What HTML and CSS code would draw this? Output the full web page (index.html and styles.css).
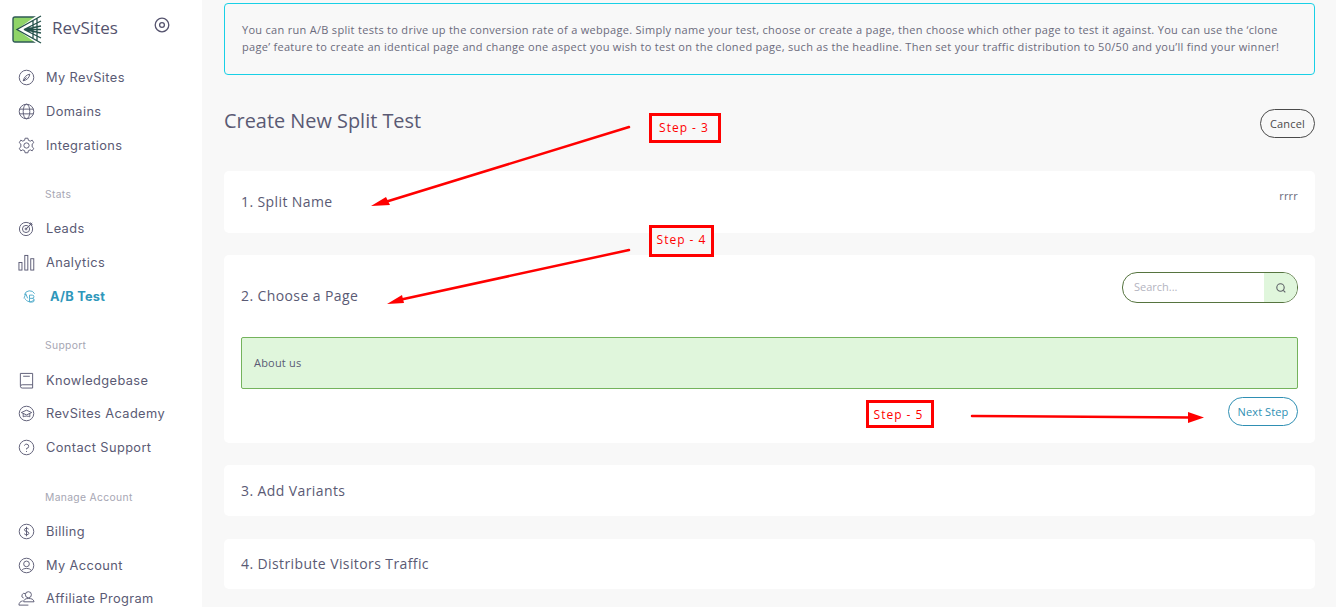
FILE: index.html
```html
<!DOCTYPE html>
<html lang="en">
<head>
<meta charset="utf-8">
<title>RevSites - Create New Split Test</title>
<link rel="stylesheet" href="styles.css">
</head>
<body>
<div class="app">
  <aside class="sidebar">
    <div class="brand">
      <svg class="logo" width="30" height="29" viewBox="0 0 30 29">
        <rect x="1" y="2" width="26" height="25" rx="2" fill="#8fd468" stroke="#2f5a55" stroke-width="1.400"/>
        <path d="M29 0V29L24 28L5 14.500L24 1Z" fill="#fff"/>
        <path d="M29 1L5 14.500L29 28M29 6L12 14.500L29 11M12 14.500H29M12 14.500L29 18M12 14.500L29 23M21 6V23M25 3.500V25.500" fill="none" stroke="#24514a" stroke-width="1.300"/>
      </svg>
      <span class="brand-name">RevSites</span>
      <svg class="collapse" width="16" height="16" viewBox="0 0 16 16" fill="none" stroke="#56546f" stroke-width="1.300"><circle cx="8" cy="8" r="6.800"/><circle cx="8" cy="8" r="2.400"/></svg>
    </div>
    <nav class="nav-group first">
      <a class="nav-item"><svg class="ico" viewBox="0 0 18 18"><circle cx="9" cy="9" r="7.700"/><path d="M12.500 5.500C9 6 6.500 8.500 5.500 12.500C9 12 12 9.500 12.500 5.500ZM5.500 12.500L9 9"/></svg>My RevSites</a>
      <a class="nav-item"><svg class="ico" viewBox="0 0 18 18"><circle cx="9" cy="9" r="7.700"/><ellipse cx="9" cy="9" rx="3.500" ry="7.700"/><path d="M1.500 6.500H16.500M1.500 11.500H16.500"/></svg>Domains</a>
      <a class="nav-item"><svg class="ico" viewBox="0 0 18 18"><circle cx="9" cy="9" r="2.800"/><path d="M7.500 1.300H10.500L11 3.500L13 4.400L15 3.300L16.700 6L15 7.500V10.500L16.700 12L15 14.700L13 13.600L11 14.500L10.500 16.700H7.500L7 14.500L5 13.600L3 14.700L1.300 12L3 10.500V7.500L1.300 6L3 3.300L5 4.400L7 3.500Z"/></svg>Integrations</a>
    </nav>
    <div class="nav-label label-stats">Stats</div>
    <nav class="nav-group">
      <a class="nav-item"><svg class="ico" viewBox="0 0 18 18"><circle cx="8.500" cy="9.500" r="7"/><circle cx="8.500" cy="9.500" r="3.800"/><circle cx="8.500" cy="9.500" r="1"/><path d="M8.500 9.500L15 3M13 2.500V5H15.500"/></svg>Leads</a>
      <a class="nav-item"><svg class="ico" viewBox="0 0 18 18"><rect x="1" y="9" width="3.200" height="8"/><rect x="7.200" y="1.500" width="3.200" height="15.500"/><rect x="13.500" y="5" width="3.200" height="12"/></svg>Analytics</a>
      <a class="nav-item active"><svg class="ico ab" viewBox="0 0 14 14"><path d="M1.500 5A6 6 0 0 1 12.500 4M12 10.500A6 6 0 0 1 2 9"/><path d="M1 9L3 4L5 9"/><path d="M7 5.500H10A1.700 1.700 0 0 1 10 9H7ZM10 9A1.900 1.900 0 0 1 10 13H7V9"/></svg>A/B Test</a>
    </nav>
    <div class="nav-label label-support">Support</div>
    <nav class="nav-group">
      <a class="nav-item"><svg class="ico" viewBox="0 0 18 18"><path d="M2.500 14.500V1.500H15.500V17H4.500A2 2 0 0 1 2.500 15A2 2 0 0 1 4.500 13.500H15.500M5.500 4.500H12.500"/></svg>Knowledgebase</a>
      <a class="nav-item nudge"><svg class="ico" viewBox="0 0 18 18"><circle cx="9" cy="9" r="7.700"/><path d="M3.500 8L9 5.500L14.500 8L9 10.500ZM5.500 9V12.500C7.500 11.500 10.500 11.500 12.500 12.500V9"/></svg>RevSites Academy</a>
      <a class="nav-item"><svg class="ico" viewBox="0 0 18 18"><circle cx="9" cy="9" r="7.700"/><path d="M6.800 7A2.300 2.300 0 1 1 9 10V11M9 12.700V13.700"/></svg>Contact Support</a>
    </nav>
    <div class="nav-label label-manage">Manage Account</div>
    <nav class="nav-group">
      <a class="nav-item"><svg class="ico" viewBox="0 0 18 18"><circle cx="9" cy="9" r="7.700"/><path d="M11.300 6.500C10.800 5.300 6.800 5 6.800 7.200C6.800 9.500 11.500 8.500 11.500 10.900C11.500 13 7.300 12.800 6.600 11.400M9 4V14"/></svg>Billing</a>
      <a class="nav-item"><svg class="ico" viewBox="0 0 18 18"><circle cx="9" cy="9" r="7.700"/><circle cx="9" cy="7.300" r="3"/><path d="M3.800 14.500C5 11.300 13 11.300 14.200 14.500"/></svg>My Account</a>
      <a class="nav-item nudge"><svg class="ico" viewBox="0 0 18 18"><circle cx="11" cy="5" r="3.200"/><path d="M6 8.500A2.500 2.500 0 1 1 8 4M6 12.500H17C16.500 9.500 14 9 11 9C8 9 6 10 6 12.500ZM1 16H11M1 16C1 13.500 2.500 12 5 11.500"/></svg>Affiliate Program</a>
    </nav>
  </aside>

  <main class="content">
    <div class="notice">You can run A/B split tests to drive up the conversion rate of a webpage. Simply name your test, choose or create a page, then choose which other page to test it against. You can use the ‘clone page’ feature to create an identical page and change one aspect you wish to test on the cloned page, such as the headline. Then set your traffic distribution to 50/50 and you’ll find your winner!</div>

    <div class="page-head">
      <h1>Create New Split Test</h1>
      <button class="btn btn-cancel">Cancel</button>
    </div>

    <section class="card card-name">
      <h2>1. Split Name</h2>
      <span class="split-value">rrrr</span>
    </section>

    <section class="card card-page">
      <div class="card-row">
        <h2>2. Choose a Page</h2>
        <div class="search">
          <span class="search-input">Search...</span>
          <span class="search-btn"><svg width="10" height="10" viewBox="0 0 10 10" fill="none" stroke="#5c6066" stroke-width="1.100"><circle cx="4.500" cy="4.500" r="3.700"/><path d="M7.300 7.300L9.300 9.300"/></svg></span>
        </div>
      </div>
      <div class="page-option">About us</div>
      <div class="card-actions"><button class="btn btn-next">Next Step</button></div>
    </section>

    <section class="card card-plain"><h2>3. Add Variants</h2></section>
    <section class="card card-plain card-last"><h2>4. Distribute Visitors Traffic</h2></section>
  </main>
</div>

<div class="step step-3">Step - 3</div>
<div class="step step-4">Step - 4</div>
<div class="step step-5">Step - 5</div>
<svg class="arrows" width="1336" height="607" viewBox="0 0 1336 607">
  <path d="M629 127L382 203M629 250L399 300M972 416L1190 417.500" fill="none" stroke="#f00" stroke-width="2.500" stroke-linecap="round"/>
  <path d="M371 206L386 197L390 205ZM387 304L402 295L404 303ZM1204 417.500L1188 412V423Z" fill="#f00"/>
</svg>
</body>
</html>
```
FILE: styles.css
```css
* { box-sizing: border-box; }
html, body { margin: 0; height: 607px; overflow: hidden; }
body { font-family: "Open Sans", "Liberation Sans", sans-serif; background: #f8f8f8; color: #5a5a74; }

.app { display: flex; height: 607px; overflow: hidden; }

.sidebar { flex: 0 0 202px; background: #fff; padding: 13px 0 0 12px; font-family: Inter, "Open Sans", sans-serif; }
.brand { display: flex; align-items: center; height: 32px; }
.logo { flex: none; }
.brand-name { margin-left: 10px; font: 500 17px "Open Sans", sans-serif; color: #55536e; position: relative; top: -2px; }
.collapse { margin-left: 36px; position: relative; top: -4px; }

.nav-group { display: flex; flex-direction: column; }
.nav-group.first { margin-top: 15px; }
.nav-item { display: flex; align-items: center; height: 34px; font-size: 12.800px; letter-spacing: .4px; color: #5a5a74; }
.nav-item.nudge { height: 33px; }
.ico { flex: none; width: 17px; height: 17px; margin: 0 11px 0 6px; fill: none; stroke: #5a5a74; stroke-width: 1; }
.nav-item.active { color: #2f97bb; font-weight: 700; letter-spacing: .25px; }
.ico.ab { width: 13px; height: 13px; margin: 0 14px 0 11px; stroke: #4ba9c9; }

.nav-label { margin-left: 33px; font-size: 10.300px; letter-spacing: .35px; color: #a6a6b3; height: 14px; line-height: 14px; }
.label-stats { margin-top: 25px; margin-bottom: 10px; }
.label-support { margin-top: 25px; margin-bottom: 11px; }
.label-manage { margin-top: 26px; margin-bottom: 10px; }

.content { flex: 1; padding: 3px 21px 0 22px; min-width: 0; }

.notice { height: 72px; padding: 17px 17px 0; border: 1px solid #18d0e6; border-radius: 4px; font-size: 11px; line-height: 17px; letter-spacing: .295px; color: #6b6b7c; }

.page-head { display: flex; justify-content: space-between; align-items: flex-end; height: 34px; margin-top: 29px; }
h1 { margin: 0 0 4px; font-size: 19.900px; font-weight: 400; color: #5a5a74; }

.btn { padding: 0; background: transparent; font-family: "Open Sans", sans-serif; font-size: 11px; border-radius: 15px; }
.btn-cancel { width: 55px; height: 29px; border: 1px solid #4a4a4a; color: #4a4a4a; letter-spacing: .2px; }

.card { background: #fff; border-radius: 5px; padding: 0 17px; }
h2 { margin: 0; font-size: 14px; font-weight: 400; letter-spacing: .4px; color: #5a5a74; }

.card-name { display: flex; justify-content: space-between; height: 62px; margin-top: 33px; padding-top: 21px; }
.split-value { font-size: 11px; color: #6b6b7c; margin-top: -4px; letter-spacing: .2px; }

.card-page { height: 188px; margin-top: 22px; padding-top: 17px; }
.card-row { display: flex; justify-content: space-between; align-items: center; height: 31px; }
.card-row h2 { position: relative; top: 8px; }

.search { display: flex; width: 176px; height: 31px; border: 1px solid #56743f; border-radius: 15px; overflow: hidden; }
.search-input { flex: 1; padding: 6px 0 0 11px; font-size: 11px; line-height: 16px; color: #b4b4bf; }
.search-btn { width: 33px; display: flex; align-items: center; justify-content: center; background: #e0f6dc; }

.page-option { display: flex; align-items: center; height: 52px; margin-top: 34px; padding: 0 0 2px 12px; background: #e0f6dc; border: 1px solid #74b35c; border-radius: 2px; font-size: 11px; letter-spacing: .2px; color: #5a5a74; }

.card-actions { display: flex; justify-content: flex-end; margin-top: 8px; }
.btn-next { width: 70px; height: 29px; border: 1px solid #2f8fb3; color: #2f8fb3; background: #fff; letter-spacing: .1px; }

.card-plain { display: flex; align-items: center; height: 51px; margin-top: 22px; }
.card-last { height: 50px; margin-top: 23px; padding-bottom: 1px; }

.step { position: absolute; display: flex; align-items: center; justify-content: center; border: 3px solid #f00; background: #fff; color: #f00; font: 400 12px "Open Sans", sans-serif; letter-spacing: 1px; }
.step-3 { left: 649px; top: 113px; width: 72px; height: 30px; padding: 0 2px 2px 0; background: #f8f8f8; }
.step-4 { left: 649px; top: 225px; width: 65px; height: 32px; padding-bottom: 3px; background: #f8f8f8; }
.step-5 { left: 866px; top: 400px; width: 68px; height: 28px; padding-right: 3px; }

.arrows { position: absolute; left: 0; top: 0; pointer-events: none; }
```
